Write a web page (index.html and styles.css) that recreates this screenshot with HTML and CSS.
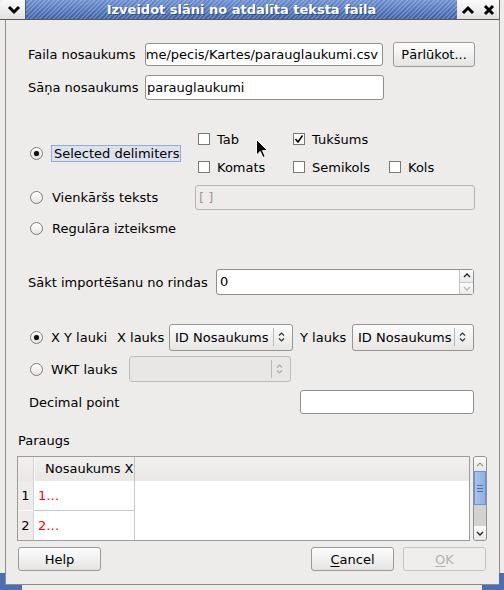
FILE: index.html
```html
<!DOCTYPE html>
<html lang="lv">
<head>
    <meta charset="UTF-8">
    <title>Izveidot slāni no atdalīta teksta faila</title>
    <link rel="stylesheet" href="styles.css">
</head>
<body>
<div class="window">
    <div class="titlebar">
        <div class="tb-btn tb-menu">
            <svg width="14" height="10" viewBox="0 0 14 10"><polyline points="2,2 7,7 12,2" fill="none" stroke="#000" stroke-width="3"/></svg>
        </div>
        <div class="tb-title">Izveidot slāni no atdalīta teksta faila</div>
        <div class="tb-btn">
            <svg width="14" height="10" viewBox="0 0 14 10"><polyline points="2,8 7,3 12,8" fill="none" stroke="#000" stroke-width="3"/></svg>
        </div>
        <div class="tb-btn">
            <svg width="12" height="12" viewBox="0 0 12 12"><path d="M2 2 L10 10 M10 2 L2 10" stroke="#000" stroke-width="3"/></svg>
        </div>
    </div>

    <div class="frame">
        <div class="dialog">
            <div class="fields">
                <div class="row row-file">
                    <span class="label">Faila nosaukums</span>
                    <input class="text file-name" type="text" value="me/pecis/Kartes/parauglaukumi.csv">
                    <button class="btn browse">Pārlūkot...</button>
                </div>
                <div class="row row-layer">
                    <span class="label">Sāņa nosaukums</span>
                    <input class="text layer-name" type="text" value="parauglaukumi">
                </div>

                <div class="delims">
                    <div class="choice choice-delims">
                        <span class="radio checked"></span>
                        <span class="focus">Selected delimiters</span>
                    </div>
                    <div class="checks">
                        <label class="check"><span class="box"></span>Tab</label>
                        <label class="check"><span class="box">
                            <svg width="10" height="10" viewBox="0 0 10 10"><polyline points="1.5,5 4,8 8.5,1.5" fill="none" stroke="#000" stroke-width="1.6"/></svg>
                        </span>Tukšums</label>
                        <span></span>
                        <label class="check"><span class="box"></span>Komats</label>
                        <label class="check"><span class="box"></span>Semikols</label>
                        <label class="check"><span class="box"></span>Kols</label>
                    </div>
                </div>

                <div class="row row-plain">
                    <div class="choice choice-plain">
                        <span class="radio"></span>
                        <span class="choice-text">Vienkāršs teksts</span>
                    </div>
                    <input class="text plain-text" type="text" value="[ ]" disabled>
                </div>
                <div class="row row-regex">
                    <div class="choice">
                        <span class="radio"></span>
                        <span class="choice-text">Regulāra izteiksme</span>
                    </div>
                </div>

                <div class="row row-start">
                    <span class="label label-start">Sākt importēšanu no rindas</span>
                    <div class="spin">
                        <span class="spin-value">0</span>
                        <div class="spin-buttons">
                            <span class="spin-up"><svg width="8" height="5" viewBox="0 0 8 5"><polyline points="1,4 4,1 7,4" fill="none" stroke="#222" stroke-width="1.3"/></svg></span>
                            <span class="spin-down"><svg width="8" height="5" viewBox="0 0 8 5"><polyline points="1,1 4,4 7,1" fill="none" stroke="#b8b8b8" stroke-width="1.3"/></svg></span>
                        </div>
                    </div>
                </div>

                <div class="row row-xy">
                    <span class="radio checked"></span>
                    <span class="xy-text">X Y lauki</span>
                    <span class="axis-label">X lauks</span>
                    <div class="combo combo-x">
                        <span class="combo-value">ID Nosaukums</span>
                        <span class="combo-sep"></span>
                        <span class="combo-arrow"><svg width="7" height="12" viewBox="0 0 7 12"><polyline points="1,4.5 3.5,2 6,4.5" fill="none" stroke="#333" stroke-width="1.2"/><polyline points="1,7.5 3.5,10 6,7.5" fill="none" stroke="#333" stroke-width="1.2"/></svg></span>
                    </div>
                    <span class="axis-label axis-y">Y lauks</span>
                    <div class="combo combo-y">
                        <span class="combo-value">ID Nosaukums</span>
                        <span class="combo-sep"></span>
                        <span class="combo-arrow"><svg width="7" height="12" viewBox="0 0 7 12"><polyline points="1,4.5 3.5,2 6,4.5" fill="none" stroke="#333" stroke-width="1.2"/><polyline points="1,7.5 3.5,10 6,7.5" fill="none" stroke="#333" stroke-width="1.2"/></svg></span>
                    </div>
                </div>
                <div class="row row-wkt">
                    <span class="radio"></span>
                    <span class="wkt-text">WKT lauks</span>
                    <div class="combo combo-wkt disabled">
                        <span class="combo-value"></span>
                        <span class="combo-sep"></span>
                        <span class="combo-arrow"><svg width="7" height="12" viewBox="0 0 7 12"><polyline points="1,4.5 3.5,2 6,4.5" fill="none" stroke="#aaa" stroke-width="1.2"/><polyline points="1,7.5 3.5,10 6,7.5" fill="none" stroke="#aaa" stroke-width="1.2"/></svg></span>
                    </div>
                </div>
                <div class="row row-decimal">
                    <span class="label label-decimal">Decimal point</span>
                    <input class="text decimal" type="text" value="">
                </div>
            </div>

            <div class="preview-label">Paraugs</div>
            <div class="preview">
                <div class="grid">
                    <div class="grid-head">
                        <span class="corner"></span>
                        <span class="col-head">Nosaukums X</span>
                    </div>
                    <div class="grid-row first">
                        <span class="rownum">1</span>
                        <span class="cell">1…</span>
                    </div>
                    <div class="grid-row">
                        <span class="rownum">2</span>
                        <span class="cell">2…</span>
                    </div>
                </div>
                <div class="vscroll">
                    <span class="sb-arrow"><svg width="8" height="5" viewBox="0 0 8 5"><polyline points="1,4 4,1 7,4" fill="none" stroke="#999" stroke-width="1.2"/></svg></span>
                    <span class="sb-thumb"><span class="grip"></span></span>
                    <span class="sb-trough"></span>
                    <span class="sb-arrow"><svg width="8" height="5" viewBox="0 0 8 5"><polyline points="1,1 4,4 7,1" fill="none" stroke="#222" stroke-width="1.3"/></svg></span>
                </div>
            </div>

            <div class="buttons">
                <button class="btn">Help</button>
                <span class="spacer"></span>
                <button class="btn"><u>C</u>ancel</button>
                <button class="btn" disabled><u>O</u>K</button>
            </div>
        </div>
    </div>

    <!-- mouse pointer -->
    <svg class="pointer" width="12" height="20" viewBox="0 0 12 20">
        <path d="M0.5 0.5 L0.5 16 L4.2 12.4 L7 18.5 L9.2 17.5 L6.5 11.6 L11.5 11.6 Z" fill="#000" stroke="#fff" stroke-width="1"/>
    </svg>
</div>
</body>
</html>
```

FILE: styles.css
```css
* {
    box-sizing: border-box;
}
body {
    margin: 0;
    font-family: "DejaVu Sans", sans-serif;
    font-size: 13px;
    color: #000;
    background: #edeceb;
}
.window {
    position: relative;
    width: 504px;
    height: 590px;
    display: flex;
    flex-direction: column;
    background: #edeceb;
}
/* blue resize corners at the bottom */
.window::before,
.window::after {
    content: "";
    position: absolute;
    bottom: 0;
    width: 22px;
    height: 17px;
    background:
        linear-gradient(#4a6db3, #4a6db3) 0 0 / 5px 100% no-repeat,
        linear-gradient(#4a6db3, #4a6db3) 0 100% / 100% 5px no-repeat;
}
.window::before {
    left: 0;
}
.window::after {
    right: 0;
    background:
        linear-gradient(#4a6db3, #4a6db3) 100% 0 / 5px 100% no-repeat,
        linear-gradient(#4a6db3, #4a6db3) 0 100% / 100% 5px no-repeat;
}

/* title bar */
.titlebar {
    display: flex;
    height: 20px;
    margin-right: 4px;
    border-right: 1px solid #6a6a6a;
    border-bottom: 1px solid #5a5a5a;
}
.tb-btn {
    width: 21px;
    display: flex;
    align-items: center;
    justify-content: center;
    background: linear-gradient(#fbfbfb, #e2e1e0);
}
.tb-menu {
    width: 26px;
    border-top-left-radius: 5px;
    border-right: 1px solid #5a5a5a;
    padding-left: 3px;
}
.tb-title {
    flex: 1;
    text-align: center;
    line-height: 19px;
    font-weight: bold;
    color: #fff;
    text-shadow: 1px 1px 0 #2f4f8c;
    background:
        repeating-linear-gradient(135deg, rgba(255, 255, 255, 0.22) 0 1.4px, transparent 1.4px 3.2px),
        linear-gradient(#6e8fd0, #3d61a6);
}

.frame {
    flex: 1;
    margin: 0 4px 5px 5px;
    border: 1px solid #8d8d8d;
    border-top: none;
}
.dialog {
    display: flex;
    flex-direction: column;
    padding: 0 12px 0 11px;
}
.fields {
    display: flex;
    flex-direction: column;
    padding: 0 12px 0 11px;
}

.row {
    display: flex;
    align-items: center;
    height: 26px;
}
.row-file { margin-top: 21px; }
.row-layer { margin-top: 7px; }
.row-plain { margin-top: 6px; }
.row-regex { margin-top: 7px; height: 22px; }
.row-start { margin-top: 30px; }
.row-xy { margin-top: 29px; }
.row-wkt { margin-top: 6px; }
.row-decimal { margin-top: 7px; }

.label {
    width: 117px;
    white-space: nowrap;
}
.label-start {
    width: 188px;
}
.label-decimal {
    width: 272px;
    padding-left: 1px;
}

input.text {
    font: inherit;
    color: #000;
    height: 25px;
    padding: 0 1px;
    border: 1px solid #8f8f8f;
    border-radius: 3px;
    background: #fff;
    outline: none;
}
.file-name {
    width: 239px;
    height: 23px !important;
    padding: 0 !important;
}
.layer-name {
    width: 239px;
}
.plain-text {
    width: 280px;
    padding-left: 3px !important;
    background: #edeceb !important;
    border-color: #b7b6b5 !important;
    color: #9a9a9a !important;
}
.decimal {
    width: 174px;
    height: 24px !important;
}

.btn {
    font: inherit;
    color: #000;
    width: 83px;
    height: 24px;
    padding: 0;
    border: 1px solid #9a9a9a;
    border-radius: 3px;
    background: linear-gradient(#fdfdfd, #e5e4e3);
}
.btn u {
    text-decoration-thickness: 1px;
    text-underline-offset: 2px;
}
.btn:disabled {
    color: #b3b3b3;
    border-color: #c5c4c3;
    background: #efeeed;
}
.browse {
    width: 82px;
    height: 25px;
    margin-left: 10px;
}

/* radio buttons and check boxes */
.radio {
    flex: none;
    width: 13px;
    height: 13px;
    margin-left: 2px;
    border: 1px solid #7b7b7b;
    border-radius: 50%;
    background: linear-gradient(#fff, #e4e4e4);
    display: flex;
    align-items: center;
    justify-content: center;
}
.radio.checked::after {
    content: "";
    width: 5px;
    height: 5px;
    border-radius: 50%;
    background: #111;
    box-shadow: 0 0 1px #555;
}
.choice {
    display: flex;
    align-items: center;
}
.choice-text {
    margin-left: 9px;
}
.choice-delims {
    width: 170px;
}
.choice-plain {
    width: 167px;
}
.focus {
    margin-left: 8px;
    padding: 0 1px 0 2px;
    height: 17px;
    line-height: 15px;
    border: 1px solid #98abcd;
    background: #dbe2ed;
}

.delims {
    display: flex;
    align-items: center;
    height: 50px;
    margin-top: 28px;
}
.checks {
    display: grid;
    grid-template-columns: 95px 96px auto;
    grid-auto-rows: 22px;
    row-gap: 6px;
}
.check {
    display: flex;
    align-items: center;
}
.box {
    width: 12px;
    height: 12px;
    margin-right: 7px;
    border: 1px solid #777;
    background: #fff;
    display: flex;
    align-items: center;
    justify-content: center;
}

/* spin box */
.spin {
    display: flex;
    width: 258px;
    height: 26px;
    border: 1px solid #8f8f8f;
    border-radius: 3px;
    background: #fff;
}
.spin-value {
    flex: 1;
    padding-left: 3px;
    line-height: 24px;
}
.spin-buttons {
    width: 14px;
    display: flex;
    flex-direction: column;
    border-left: 1px solid #c4c4c4;
}
.spin-up,
.spin-down {
    flex: 1;
    display: flex;
    align-items: center;
    justify-content: center;
    background: linear-gradient(#fbfbfb, #eaeaea);
}
.spin-up {
    border-bottom: 1px solid #c8c8c8;
}

/* field selectors */
.xy-text {
    width: 66px;
    margin-left: 8px;
}
.wkt-text {
    width: 78px;
    margin-left: 8px;
}
.axis-label {
    width: 52px;
}
.axis-y {
    margin-left: 7px;
}
.combo {
    display: flex;
    align-items: center;
    height: 27px;
    border: 1px solid #959595;
    border-radius: 3px;
    background: linear-gradient(#fcfcfc, #e7e6e5);
}
.combo-x { width: 124px; }
.combo-y { width: 122px; }
.combo-wkt { width: 162px; height: 26px; }
.combo.disabled {
    border-color: #bdbcbb;
    background: #e8e7e6;
}
.combo-value {
    flex: 1;
    padding-left: 5px;
    white-space: nowrap;
    overflow: hidden;
}
.combo-sep {
    width: 1px;
    height: 18px;
    background: #b9b9b9;
}
.combo-arrow {
    width: 18px;
    display: flex;
    padding-left: 4px;
}

/* preview table */
.preview-label {
    margin-top: 18px;
    height: 16px;
    padding-left: 1px;
}
.preview {
    display: flex;
    gap: 3px;
    height: 85px;
    margin-top: 7px;
}
.grid {
    flex: 1;
    border: 1px solid #9c9c9c;
    background: #fff;
}
.grid-head {
    display: flex;
    height: 24px;
    background: linear-gradient(#f1f0ef, #e9e8e7);
}
.corner {
    width: 16px;
    border-right: 1px solid #d2d1d0;
}
.col-head {
    width: 101px;
    padding-left: 10px;
    line-height: 24px;
    white-space: nowrap;
    overflow: hidden;
    border-left: 1px solid #fff;
    border-right: 1px solid #c3c2c1;
}
.grid-row {
    display: flex;
    height: 29px;
}
.grid-row.first {
    height: 30px;
}
.rownum {
    width: 16px;
    text-align: center;
    line-height: 29px;
    background: #edeceb;
    border-right: 1px solid #d6d5d4;
}
.grid-row.first .rownum {
    border-bottom: 1px solid #fafafa;
}
.cell {
    width: 101px;
    padding-left: 4px;
    line-height: 29px;
    color: #f00;
    border-right: 1px solid #c6c6c6;
}
.grid-row.first .cell {
    border-bottom: 1px solid #c6c6c6;
}

.vscroll {
    width: 14px;
    display: flex;
    flex-direction: column;
    border: 1px solid #909090;
    border-radius: 3px;
    background: #d3d2d1;
    overflow: hidden;
}
.sb-arrow {
    height: 14px;
    display: flex;
    align-items: center;
    justify-content: center;
    background: linear-gradient(#fbfbfb, #e9e8e7);
}
.sb-thumb {
    height: 34px;
    display: flex;
    align-items: center;
    justify-content: center;
    border: 1px solid #6f93cc;
    background: linear-gradient(90deg, #a9c4ec, #8eb0e2);
}
.grip {
    width: 6px;
    height: 7px;
    background: repeating-linear-gradient(#4f72b3 0 1px, transparent 1px 3px);
}
.sb-trough {
    flex: 1;
}

.buttons {
    display: flex;
    gap: 9px;
    height: 24px;
    margin-top: 6px;
    padding: 0 1px;
}
.spacer {
    flex: 1;
}

.pointer {
    position: absolute;
    left: 256px;
    top: 139px;
}
```
